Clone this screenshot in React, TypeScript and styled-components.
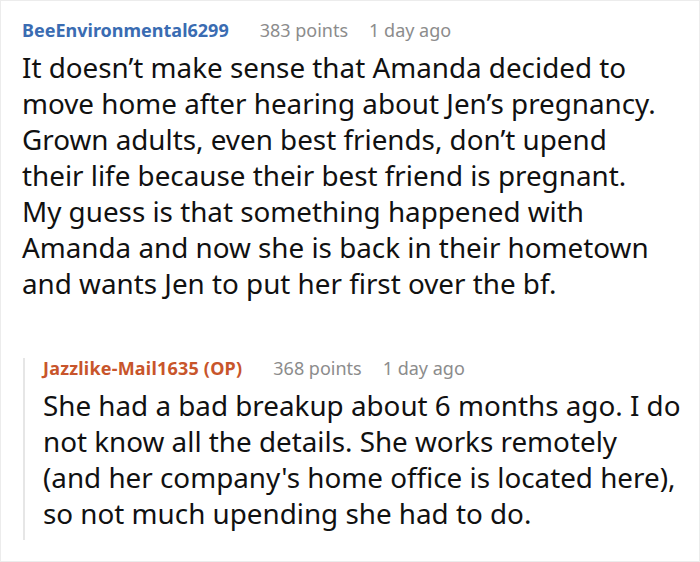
import React from "react";
import styled, { createGlobalStyle } from "styled-components";

const Global = createGlobalStyle`
  html, body { margin: 0; padding: 0; background: #fff; }
  body { font-family: "Noto Sans", "Open Sans", sans-serif; }
`;

const Frame = styled.div`
  width: 700px;
  height: 562px;
  box-sizing: border-box;
  border: 1px solid #ececec;
  padding: 19px 0 0 21px;
  overflow: hidden;
`;

const Header = styled.div`
  display: flex;
  align-items: baseline;
  gap: 21px;
  font-size: 18px;
  line-height: 20px;
`;

const User = styled.span<{ $color: string; $wide?: boolean }>`
  font-weight: 700;
  color: ${(p) => p.$color};
  margin-right: 10px;
  letter-spacing: ${(p) => (p.$wide ? "0.2px" : "0")};
`;

const Meta = styled.span`
  color: #8c8c8c;
`;

const Body = styled.p`
  margin: 9px 0 0;
  font-size: 27.8px;
  line-height: 36px;
  color: #111;
`;

const Reply = styled.div`
  margin-top: 57px;
  margin-left: 1px;
  border-left: 2px solid #e6e6e6;
  padding: 0 0 9px 18px;
`;

type C = { user: string; color: string; points: string; age: string; wide?: boolean; text: React.ReactNode };

const Comment = ({ user, color, points, age, wide, text }: C) => (
  <>
    <Header>
      <User $color={color} $wide={wide}>{user}</User>
      <Meta>{points}</Meta>
      <Meta>{age}</Meta>
    </Header>
    <Body>{text}</Body>
  </>
);

export default function App() {
  return (
    <>
      <Global />
      <Frame>
        <Comment
          user="BeeEnvironmental6299"
          color="#3a6cb2"
          points="383 points"
          age="1 day ago"
          text={
            <>
              It doesn’t make sense that Amanda decided to<br />
              move home after hearing about Jen’s pregnancy.<br />
              Grown adults, even best friends, don’t upend<br />
              their life because their best friend is pregnant.<br />
              My guess is that something happened with<br />
              Amanda and now she is back in their hometown<br />
              and wants Jen to put her first over the bf.
            </>
          }
        />
        <Reply>
          <Comment
            user="Jazzlike-Mail1635 (OP)"
            color="#c8552b"
            points="368 points"
            age="1 day ago"
            wide
            text={
              <>
                She had a bad breakup about 6 months ago. I do<br />
                not know all the details. She works remotely<br />
                (and her company's home office is located here),<br />
                so not much upending she had to do.
              </>
            }
          />
        </Reply>
      </Frame>
    </>
  );
}
